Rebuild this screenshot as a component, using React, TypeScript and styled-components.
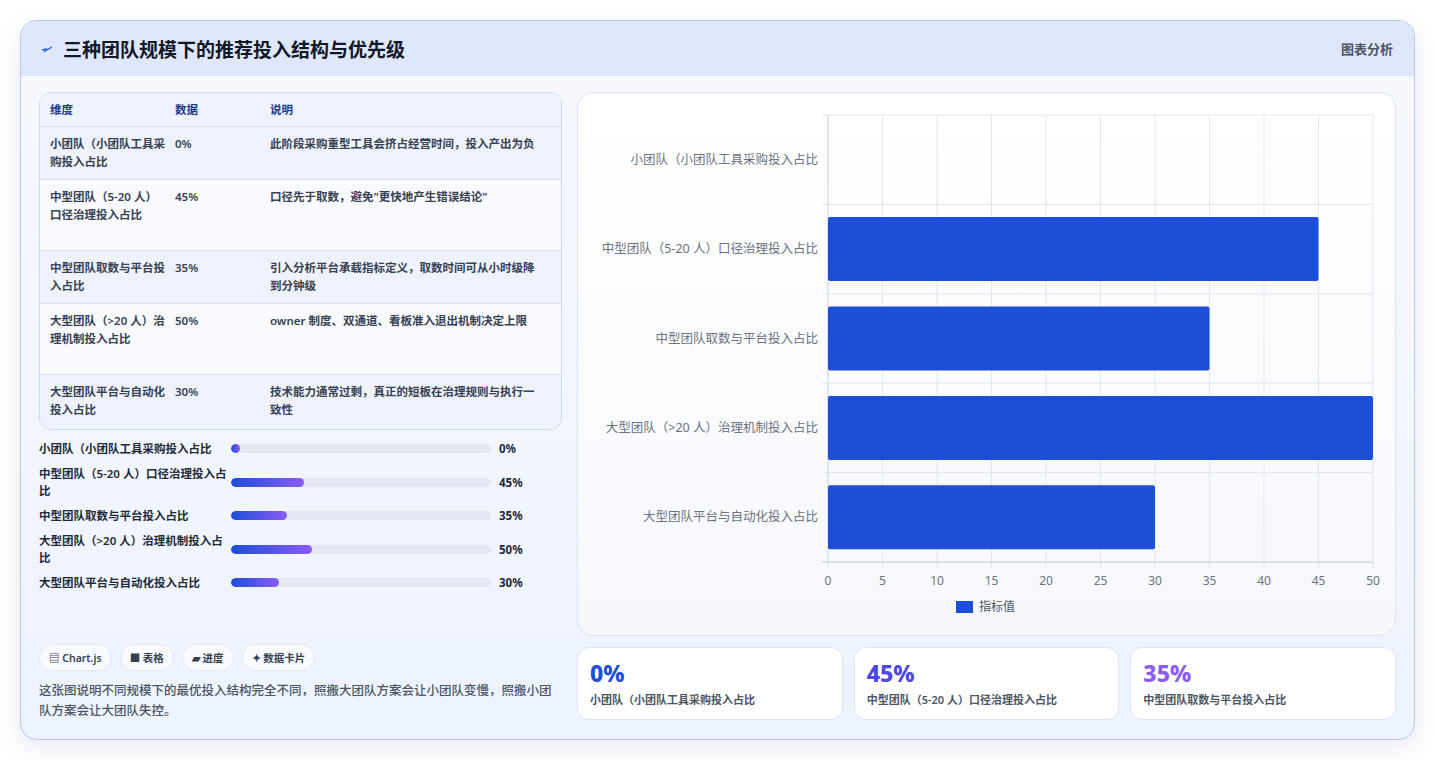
import React from "react";
import styled, { createGlobalStyle } from "styled-components";

const Global = createGlobalStyle`
  body { margin: 0; background: #fff; font-family: "Noto Sans", "Noto Sans CJK SC", sans-serif; }
`;
const Page = styled.div`padding: 20px; width: 1435px; box-sizing: border-box;`;
const Card = styled.div`
  width: 1395px; height: 720px; box-sizing: border-box; border: 1px solid #b9c6f0; border-radius: 16px;
  background: linear-gradient(180deg, #f7f9fe, #edf3ff); overflow: hidden;
  box-shadow: 0 8px 24px rgba(60,80,160,0.12); display: flex; flex-direction: column;
`;
const Header = styled.div`
  height: 55px; background: #dfe7fd; display: flex; align-items: center; justify-content: space-between;
  padding: 0 21px 0 20px; flex-shrink: 0;
`;
const Title = styled.h1`margin: 0; font-size: 19px; font-weight: 700; color: #111827; display: flex; align-items: center; gap: 10px;`;
const Tag = styled.span`font-size: 13px; color: #4b5563; font-weight: 600;`;
const Body = styled.div`display: flex; gap: 15px; padding: 16px 18px 18px 18px; flex: 1; min-height: 0;`;
const Left = styled.div`width: 525px; display: flex; flex-direction: column;`;
const Right = styled.div`flex: 1; display: flex; flex-direction: column; gap: 11px;`;
const Table = styled.div`border: 1px solid #cdd8ee; border-radius: 12px; overflow: hidden; background: #f8fafe;`;
const Row = styled.div<{ h: number; bg: string; head?: boolean }>`
  display: grid; grid-template-columns: 125px 95px 1fr; height: ${p => p.h}px; box-sizing: border-box;
  background: ${p => p.bg}; border-bottom: 1px solid #d8e0ef; padding: 8px 10px 0 10px;
  font-size: 11.5px; line-height: 18px; font-weight: 600; color: ${p => p.head ? "#1e3a8a" : "#374151"};
  align-items: ${p => p.head ? "center" : "start"};
  ${p => p.head ? "padding-top: 0;" : ""}
  &:last-child { border-bottom: none; }
`;
const Cell = styled.div`padding-right: 10px;`;
const Bars = styled.div`display: flex; flex-direction: column; gap: 8px; margin-top: 10px;`;
const BarRow = styled.div`display: grid; grid-template-columns: 192px 260px 1fr; align-items: center; gap: 0 0;`;
const BarLabel = styled.div`font-size: 11.5px; font-weight: 600; line-height: 17px; color: #1f2937;`;
const Track = styled.div`height: 9px; background: #e3e8f2; border-radius: 5px; overflow: hidden;`;
const Fill = styled.div`height: 100%; border-radius: 5px; background: linear-gradient(90deg, #1d4ed8, #8b5cf6); min-width: 9px;`;
const BarVal = styled.div`font-size: 11.5px; font-weight: 700; color: #1f2937; padding-left: 8px;`;
const Chips = styled.div`display: flex; gap: 8px; margin-top: auto;`;
const Chip = styled.span`
  font-size: 10.5px; font-weight: 600; color: #374151; background: #f8fafd; border: 1px solid #e2e8f3;
  border-radius: 14px; padding: 5px 9px;
`;
const Note = styled.p`margin: 10px 0 0; font-size: 12.5px; line-height: 20px; color: #4b5563; font-weight: 500;`;
const ChartCard = styled.div`
  height: 544px; box-sizing: border-box; background: linear-gradient(180deg, #fff, #f6f8fc);
  border: 1px solid #dde5f2; border-radius: 16px; position: relative;
`;
const Stats = styled.div`display: flex; gap: 11px;`;
const Stat = styled.div`
  flex: 1; height: 73px; box-sizing: border-box; background: #fff; border: 1px solid #dde5f2; border-radius: 12px;
  padding: 10px 12px;
`;
const StatNum = styled.div<{ c: string }>`font-size: 23px; font-weight: 800; color: ${p => p.c}; line-height: 30px;`;
const StatLabel = styled.div`font-size: 11px; font-weight: 600; color: #4b5563; margin-top: 3px;`;

const data = [
  { full: "小团队（小团队工具采购投入占比", bar: "小团队（小团队工具采购投入占比", v: 0, d: "此阶段采购重型工具会挤占经营时间，投入产出为负", h: 53 },
  { full: "中型团队（5-20 人）口径治理投入占比", bar: "中型团队（5-20 人）口径治理投入占比", v: 45, d: "口径先于取数，避免\"更快地产生错误结论\"", h: 71 },
  { full: "中型团队取数与平台投入占比", bar: "中型团队取数与平台投入占比", v: 35, d: "引入分析平台承载指标定义，取数时间可从小时级降到分钟级", h: 53 },
  { full: "大型团队（>20 人）治理机制投入占比", bar: "大型团队（>20 人）治理机制投入占比", v: 50, d: "owner 制度、双通道、看板准入退出机制决定上限", h: 71 },
  { full: "大型团队平台与自动化投入占比", bar: "大型团队平台与自动化投入占比", v: 30, d: "技术能力通常过剩，真正的短板在治理规则与执行一致性", h: 54 },
];

function Chart() {
  const x0 = 250, x1 = 795, y0 = 22, y1 = 469;
  const rh = (y1 - y0) / 5;
  const ticks = [0, 5, 10, 15, 20, 25, 30, 35, 40, 45, 50];
  return (
    <svg width="817" height="542" style={{ display: "block" }}>
      {ticks.map(t => { const x = x0 + (t / 50) * (x1 - x0); return (
        <g key={t}>
          <line x1={x} y1={y0} x2={x} y2={y1 + 6} stroke="#e1e7ee" />
          <text x={x} y={y1 + 23} fontSize="12" fill="#6b7280" textAnchor="middle" fontFamily="Noto Sans">{t}</text>
        </g>); })}
      {[0, 1, 2, 3, 4, 5].map(i => <line key={i} x1={x0 - 6} x2={x1} y1={y0 + i * rh} y2={y0 + i * rh} stroke="#e1e7ee" />)}
      <line x1={x0} y1={y0} x2={x0} y2={y1} stroke="#d4dbe6" />
      <line x1={x0 - 6} y1={y1} x2={x1} y2={y1} stroke="#c8d0dc" />
      {data.map((d, i) => { const cy = y0 + i * rh + rh / 2; const w = (d.v / 50) * (x1 - x0); return (
        <g key={i}>
          {w > 0 && <rect x={x0} y={cy - 32} width={w} height={64} rx="2" fill="#1d4ed8" />}
          <text x={x0 - 10} y={cy + 4} fontSize="12.5" fill="#6b7280" textAnchor="end" fontFamily="Noto Sans, Noto Sans CJK SC">{d.full}</text>
        </g>); })}
      <rect x={378} y={508} width={17} height={12} fill="#1d4ed8" />
      <text x={401} y={518} fontSize="12" fill="#4b5563" fontFamily="Noto Sans CJK SC">指标值</text>
    </svg>
  );
}

export default function App() {
  return (
    <Page>
      <Global />
      <Card>
        <Header>
          <Title><svg width="12" height="10" viewBox="0 0 12 10"><path d="M1 6 L5 5 L4 7 L11 3" stroke="#2563eb" strokeWidth="1.4" fill="none" /></svg>三种团队规模下的推荐投入结构与优先级</Title>
          <Tag>图表分析</Tag>
        </Header>
        <Body>
          <Left>
            <Table>
              <Row h={34} bg="#eef3fd" head><Cell>维度</Cell><Cell>数据</Cell><Cell>说明</Cell></Row>
              {data.map((d, i) => (
                <Row key={i} h={d.h} bg={i % 2 === 0 ? "#eef2fd" : "#f8fafd"}>
                  <Cell>{d.full}</Cell><Cell>{d.v}%</Cell><Cell>{d.d}</Cell>
                </Row>
              ))}
            </Table>
            <Bars>
              {data.map((d, i) => (
                <BarRow key={i}>
                  <BarLabel>{d.bar}</BarLabel>
                  <Track><Fill style={{ width: `${(d.v / 50) * 100 * 0.5 * 0.62}%` }} /></Track>
                  <BarVal>{d.v}%</BarVal>
                </BarRow>
              ))}
            </Bars>
            <Chips>
              <Chip>▤ Chart.js</Chip><Chip>■ 表格</Chip><Chip>▰ 进度</Chip><Chip>✦ 数据卡片</Chip>
            </Chips>
            <Note>这张图说明不同规模下的最优投入结构完全不同，照搬大团队方案会让小团队变慢，照搬小团队方案会让大团队失控。</Note>
          </Left>
          <Right>
            <ChartCard><Chart /></ChartCard>
            <Stats>
              <Stat><StatNum c="#1d4ed8">0%</StatNum><StatLabel>小团队（小团队工具采购投入占比</StatLabel></Stat>
              <Stat><StatNum c="#4f46e5">45%</StatNum><StatLabel>中型团队（5-20 人）口径治理投入占比</StatLabel></Stat>
              <Stat><StatNum c="#8b5cf6">35%</StatNum><StatLabel>中型团队取数与平台投入占比</StatLabel></Stat>
            </Stats>
          </Right>
        </Body>
      </Card>
    </Page>
  );
}
